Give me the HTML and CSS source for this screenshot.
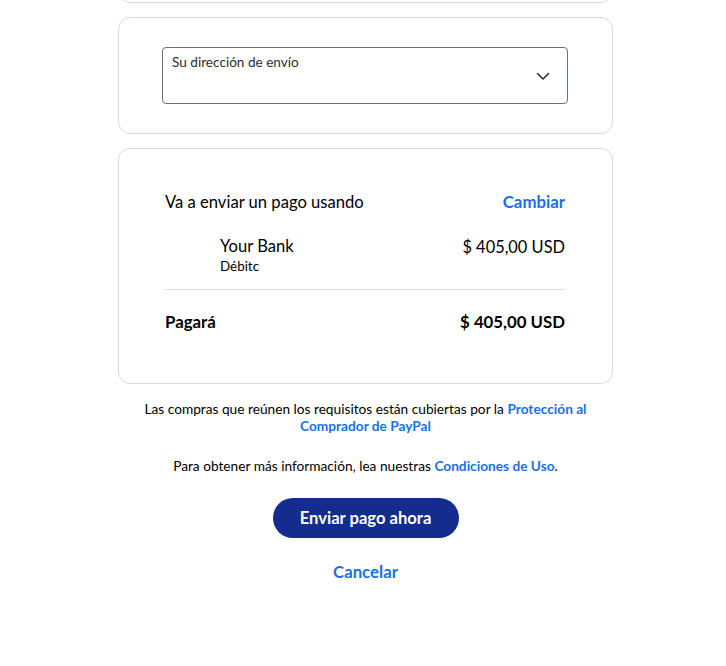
FILE: index.html
```html
<!DOCTYPE html>
<html lang="es">
<head>
<meta charset="utf-8">
<title>Revisar pago</title>
<link rel="stylesheet" href="styles.css">
</head>
<body>
<main class="page">
  <section class="card card-stub"></section>

  <section class="card card-ship">
    <div class="select">
      <div class="select-text">
        <span class="select-label">Su dirección de envío</span>
        <span class="select-value"></span>
      </div>
      <svg class="chevron" width="14" height="9" viewBox="0 0 14 9" aria-hidden="true">
        <path d="M1.5 1.5 L7 7 L12.5 1.5" fill="none" stroke="#2c2e2f" stroke-width="1.6" stroke-linecap="round" stroke-linejoin="round"/>
      </svg>
    </div>
  </section>

  <section class="card card-pay">
    <div class="pay-head">
      <span class="pay-title">Va a enviar un pago usando</span>
      <a class="link-strong" href="#">Cambiar</a>
    </div>
    <div class="pay-row">
      <div class="bank-icon"></div>
      <div class="bank-info">
        <span class="bank-name">Your Bank</span>
        <span class="bank-type">Débitc</span>
      </div>
      <span class="bank-amount">$ 405,00 USD</span>
    </div>
    <hr class="divider">
    <div class="pay-total">
      <span>Pagará</span>
      <span>$ 405,00 USD</span>
    </div>
  </section>

  <p class="note">Las compras que reúnen los requisitos están cubiertas por la <a class="link" href="#">Protección al Comprador de PayPal</a></p>
  <p class="note note-terms">Para obtener más información, lea nuestras <a class="link" href="#">Condiciones de Uso</a>.</p>

  <div class="actions">
    <button class="btn-primary" type="button">Enviar pago ahora</button>
    <a class="link-strong cancel" href="#">Cancelar</a>
  </div>
</main>
</body>
</html>
```

FILE: styles.css
```css
* { box-sizing: border-box; }

html, body {
  margin: 0;
  padding: 0;
  background: #ffffff;
}

body {
  font-family: Lato, "Noto Sans", "Liberation Sans", sans-serif;
  color: #2c2e2f;
  overflow: hidden;
}

.page {
  width: 500px;
  padding-left: 5px;
  margin: 0 auto;
  display: flex;
  flex-direction: column;
}

.card {
  border: 1px solid #dcdad5;
  border-radius: 12px;
  background: #fff;
}

.card-stub {
  height: 100px;
  margin-top: -97px;
}

.card-ship {
  margin-top: 14px;
  padding: 29px 44px 29px 43px;
}

.select {
  height: 57px;
  border: 1px solid #6c7378;
  border-radius: 4px;
  display: flex;
  align-items: center;
  justify-content: space-between;
  padding: 0 17px 0 9px;
}

.select-text {
  display: flex;
  flex-direction: column;
  align-self: flex-start;
  padding-top: 6px;
}

.select-label {
  font-size: 13.6px;
  line-height: 16px;
  color: #2c2e2f;
}

.select-value {
  height: 18px;
}

.chevron {
  display: block;
  margin-top: 2px;
}

.card-pay {
  margin-top: 14px;
  padding: 41px 47px 49px 46px;
}

.pay-head {
  display: flex;
  justify-content: space-between;
  align-items: center;
  height: 24px;
}

.pay-title {
  font-size: 16.6px;
  line-height: 24px;
  color: #000;
}

.link-strong {
  color: #1a6fe8;
  font-weight: 700;
  font-size: 16.8px;
  line-height: 24px;
  text-decoration: none;
}

.pay-row {
  margin-top: 22px;
  display: flex;
  align-items: flex-start;
}

.bank-icon {
  width: 55px;
  height: 38px;
  flex: none;
}

.bank-info {
  display: flex;
  flex-direction: column;
  flex: 1;
}

.bank-name {
  font-size: 16.6px;
  line-height: 21px;
  color: #000;
}

.bank-type {
  font-size: 13.4px;
  line-height: 18px;
  color: #000;
}

.bank-amount {
  font-size: 16.4px;
  line-height: 21px;
  color: #000;
}

.divider {
  margin: 14px 0 0;
  border: 0;
  border-top: 1px solid #dcdcdc;
  height: 0;
}

.pay-total {
  margin-top: 20px;
  display: flex;
  justify-content: space-between;
  font-size: 16.8px;
  line-height: 24px;
  font-weight: 700;
  color: #000;
}

.note {
  margin: 16px auto 0;
  max-width: 470px;
  text-align: center;
  font-size: 13.7px;
  line-height: 17px;
  color: #000;
}

.note-terms {
  margin-top: 23px;
}

.link {
  color: #1a6fe8;
  font-weight: 700;
  text-decoration: none;
}

.actions {
  margin-top: 24px;
  display: flex;
  flex-direction: column;
  align-items: center;
  gap: 22px;
}

.btn-primary {
  width: 186px;
  height: 40px;
  border: 0;
  border-radius: 20px;
  background: #142c8e;
  color: #fff;
  font-family: inherit;
  font-size: 16.6px;
  font-weight: 700;
  cursor: pointer;
}

.cancel {
  display: block;
}
```
